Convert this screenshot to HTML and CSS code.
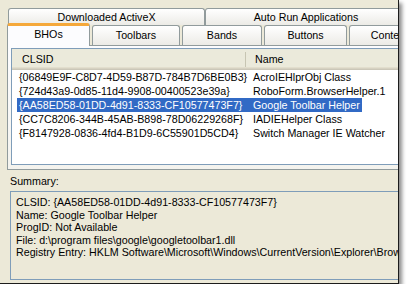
FILE: index.html
```html
<!DOCTYPE html>
<html lang="en">
<head>
    <meta charset="UTF-8">
    <title>BHOs</title>
    <link rel="stylesheet" href="styles.css">
</head>
<body>
    <div class="janela">
        <div class="abas">
            <div class="linha-abas atras">
                <div class="aba aba-activex">Downloaded ActiveX</div>
                <div class="aba aba-autorun">Auto Run Applications</div>
            </div>
            <div class="linha-abas frente">
                <div class="aba ativa aba-bho">BHOs</div>
                <div class="aba aba-toolbars">Toolbars</div>
                <div class="aba aba-bands">Bands</div>
                <div class="aba aba-buttons">Buttons</div>
                <div class="aba aba-context">Context Menu</div>
            </div>
        </div>

        <div class="painel">
            <div class="lista">
                <div class="cabecalho">
                    <div class="cab cab-clsid">CLSID</div>
                    <div class="cab cab-nome">Name</div>
                </div>
                <div class="linha">
                    <div class="cel cel-clsid">{06849E9F-C8D7-4D59-B87D-784B7D6BE0B3}</div>
                    <div class="cel cel-nome">AcroIEHlprObj Class</div>
                </div>
                <div class="linha">
                    <div class="cel cel-clsid">{724d43a9-0d85-11d4-9908-00400523e39a}</div>
                    <div class="cel cel-nome">RoboForm.BrowserHelper.1</div>
                </div>
                <div class="linha selecionada">
                    <div class="cel cel-clsid">{AA58ED58-01DD-4d91-8333-CF10577473F7}</div>
                    <div class="cel cel-nome">Google Toolbar Helper</div>
                </div>
                <div class="linha">
                    <div class="cel cel-clsid">{CC7C8206-344B-45AB-B898-78D06229268F}</div>
                    <div class="cel cel-nome">IADIEHelper Class</div>
                </div>
                <div class="linha">
                    <div class="cel cel-clsid">{F8147928-0836-4fd4-B1D9-6C55901D5CD4}</div>
                    <div class="cel cel-nome">Switch Manager IE Watcher</div>
                </div>
            </div>
        </div>

        <div class="resumo">
            <div class="resumo-titulo">Summary:</div>
            <div class="resumo-caixa">
                <div>CLSID: {AA58ED58-01DD-4d91-8333-CF10577473F7}</div>
                <div>Name: Google Toolbar Helper</div>
                <div>ProgID: Not Available</div>
                <div>File: d:\program files\google\googletoolbar1.dll</div>
                <div>Registry Entry: HKLM Software\Microsoft\Windows\CurrentVersion\Explorer\Browser Helper Objects</div>
            </div>
        </div>
    </div>
</body>
</html>
```

FILE: styles.css
```css
/* --- Base --- */
* {
    margin: 0;
    padding: 0;
    box-sizing: border-box;
}

body {
    background: #ffffff;
    font-family: 'Liberation Sans', Arial, sans-serif;
    font-size: 10.7px;
    color: #000000;
}

/* --- Janela recortada com sombra --- */
.janela {
    width: 399px;
    height: 284px;
    overflow: hidden;
    background: #ece9d8;
    border-right: 1px solid #1c1c1c;
    border-bottom: 1px solid #1c1c1c;
    box-shadow: 3px 3px 4px rgba(0, 0, 0, 0.45);
    padding: 8px 0 0 7px;
}

/* --- Abas --- */
.linha-abas {
    display: flex;
    white-space: nowrap;
}

.atras {
    margin-left: 1px;
    height: 17px;
}

.frente {
    position: relative;
    z-index: 2;
    height: 22px;
    margin-top: -2px;
    align-items: flex-end;
}

.aba {
    flex-shrink: 0;
    text-align: center;
    border: 1px solid #919b9c;
    border-bottom: none;
    border-radius: 3px 3px 0 0;
    background: linear-gradient(#ffffff, #ecebe6);
}

.atras .aba {
    height: 17px;
    line-height: 16px;
}

.aba-activex { width: 197px; }
.aba-autorun { width: 202px; }

.frente .aba {
    height: 20px;
    line-height: 19px;
    margin-left: 2px;
}

.frente .aba.ativa {
    height: 23px;
    margin-left: 0;
    margin-bottom: -1px;
    line-height: 17px;
    border-top: 3px solid #f5a83a;
    background: #fcfcfe;
}

.aba-bho { width: 83px; }
.aba-toolbars { width: 88px; }
.aba-bands { width: 80px; }
.aba-buttons { width: 83px; }
.aba-context { width: 110px; }

/* --- Painel da aba --- */
.painel {
    width: 420px;
    height: 125px;
    border: 1px solid #919b9c;
    background: linear-gradient(#fcfcfe, #f4f3ee);
    padding: 2px 0 0 3px;
}

.lista {
    width: 420px;
    height: 117px;
    border: 1px solid #7f9db9;
    background: #ffffff;
}

.cabecalho {
    display: flex;
    height: 21px;
    line-height: 21px;
    background: linear-gradient(#ebeadb 0, #ebeadb 18px, #e2decd 18px, #e2decd 19px, #d6d2c2 19px, #d6d2c2 20px, #cbc7b8 20px);
}

.cab {
    position: relative;
}

.cab-clsid {
    width: 234px;
    padding-left: 10px;
}

.cab-clsid::after {
    content: '';
    position: absolute;
    right: 0;
    top: 3px;
    bottom: 3px;
    width: 1px;
    background: #c7c5b2;
}

.cab-nome {
    padding-left: 9px;
}

.linha {
    display: flex;
    height: 14px;
    line-height: 14px;
    padding-left: 5px;
    white-space: nowrap;
}

.cel-clsid {
    width: 229px;
    padding-left: 2px;
}

.cel-nome {
    width: 116px;
    padding-left: 7px;
}

.selecionada .cel {
    background: #316ac5;
    color: #ffffff;
}

/* --- Resumo --- */
.resumo {
    padding-left: 3px;
}

.resumo-titulo {
    margin-top: 5px;
    line-height: 13px;
}

.resumo-caixa {
    width: 420px;
    height: 89px;
    margin-top: 3px;
    border: 1px solid #7f9db9;
    background: #ece9d8;
    padding: 4px 0 0 5px;
    line-height: 12.5px;
    white-space: nowrap;
}
```
